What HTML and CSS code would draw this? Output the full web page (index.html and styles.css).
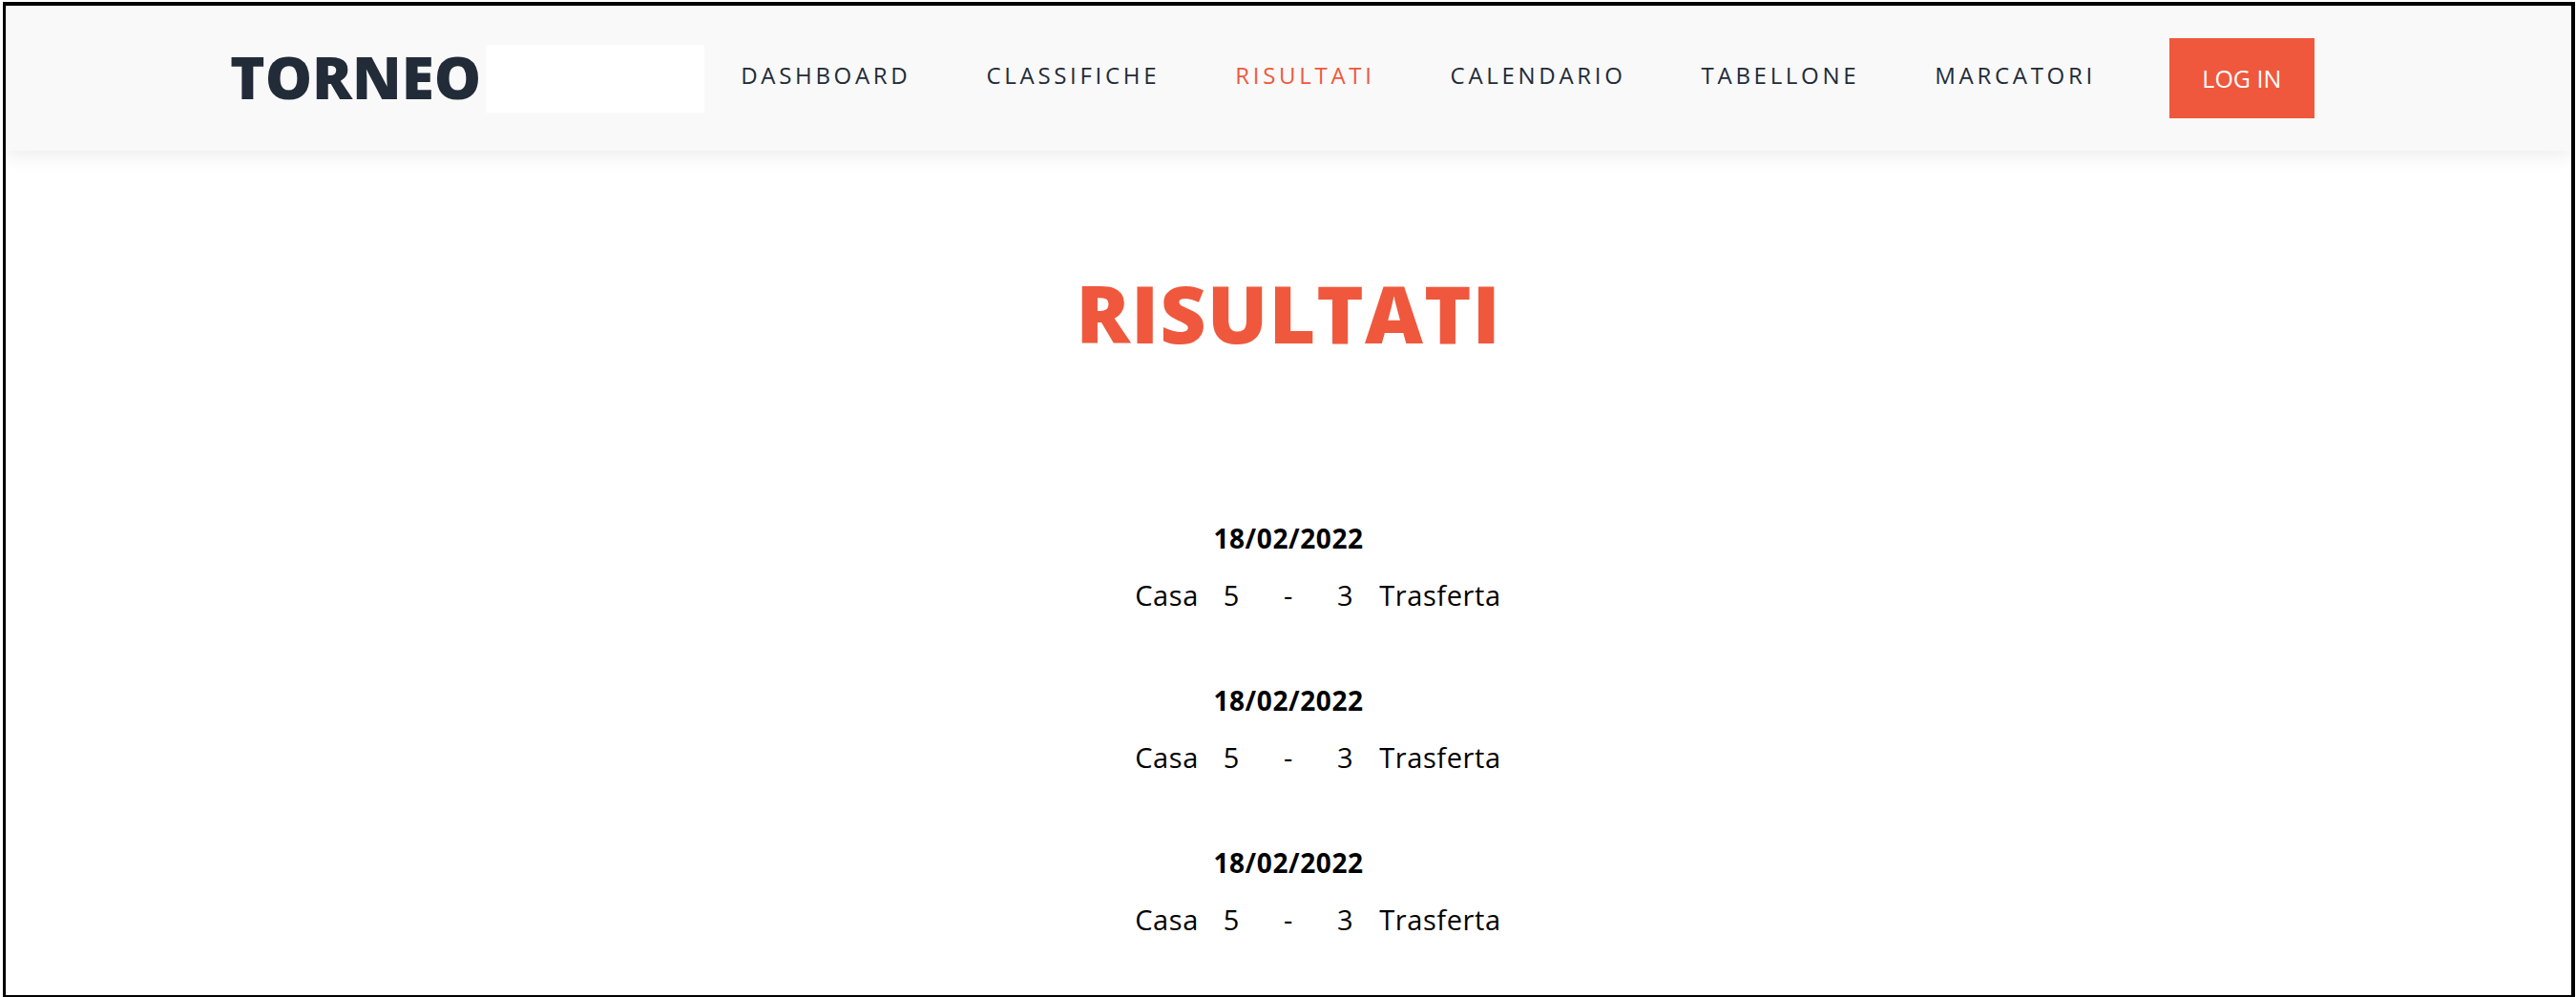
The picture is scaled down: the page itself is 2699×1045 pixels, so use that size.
FILE: index.html
```html
<!DOCTYPE html>
<html lang="it">
<head>
<meta charset="utf-8">
<title>Torneo - Risultati</title>
<link rel="stylesheet" href="styles.css">
</head>
<body>
<div class="frame">
  <header class="topbar">
    <div class="brand">
      <span class="logo">TORNEO</span>
      <span class="logo-box"></span>
    </div>
    <nav class="nav">
      <a class="nav-link" href="#">DASHBOARD</a>
      <a class="nav-link" href="#">CLASSIFICHE</a>
      <a class="nav-link active" href="#">RISULTATI</a>
      <a class="nav-link" href="#">CALENDARIO</a>
      <a class="nav-link" href="#">TABELLONE</a>
      <a class="nav-link" href="#">MARCATORI</a>
    </nav>
    <a class="login" href="#">LOG IN</a>
  </header>
  <main class="content">
    <h1 class="title">RISULTATI</h1>
    <section class="results">
      <div class="match">
        <div class="date">18/02/2022</div>
        <div class="score">
          <span class="home"><span>Casa</span><span>5</span></span>
          <span class="sep">-</span>
          <span class="away"><span>3</span><span>Trasferta</span></span>
        </div>
      </div>
      <div class="match">
        <div class="date">18/02/2022</div>
        <div class="score">
          <span class="home"><span>Casa</span><span>5</span></span>
          <span class="sep">-</span>
          <span class="away"><span>3</span><span>Trasferta</span></span>
        </div>
      </div>
      <div class="match">
        <div class="date">18/02/2022</div>
        <div class="score">
          <span class="home"><span>Casa</span><span>5</span></span>
          <span class="sep">-</span>
          <span class="away"><span>3</span><span>Trasferta</span></span>
        </div>
      </div>
    </section>
  </main>
</div>
</body>
</html>
```
FILE: styles.css
```css
html, body {
  margin: 0;
  padding: 0;
  background: #ffffff;
}
body {
  font-family: "Open Sans", "Noto Sans", sans-serif;
  color: #000;
}
.frame {
  margin: 2px 1px 0 3px;
  border-style: solid;
  border-color: #000;
  border-width: 4px 4px 2px 3px;
  height: 1043px;
  box-sizing: border-box;
  overflow: hidden;
  background: #fff;
}
.topbar {
  height: 152px;
  background: #f9f9f9;
  box-shadow: 0 6px 18px rgba(0, 0, 0, 0.07);
  display: flex;
  align-items: center;
  padding-left: 235px;
  position: relative;
  z-index: 1;
}
.brand {
  display: flex;
  align-items: center;
}
.logo {
  font-family: "Open Sans", sans-serif;
  font-weight: 800;
  font-size: 62px;
  color: #222b38;
  line-height: 1;
  padding-bottom: 4px;
}
.logo-box {
  display: block;
  width: 229px;
  height: 71px;
  background: #ffffff;
  margin-left: 5px;
}
.nav {
  display: flex;
  align-items: center;
  gap: 79px;
  margin-left: 38px;
}
.nav-link {
  font-size: 24px;
  letter-spacing: 3.7px;
  color: #222b38;
  text-decoration: none;
  line-height: 1;
  padding-bottom: 6px;
}
.nav-link.active {
  color: #ef583d;
}
.login {
  margin-left: 77px;
  width: 152px;
  height: 84px;
  background: #ef583d;
  color: #fff;
  font-size: 25px;
  text-decoration: none;
  display: flex;
  align-items: center;
  justify-content: center;
}
.content {
  display: flex;
  flex-direction: column;
  align-items: center;
}
.title {
  margin: 128px 0 0;
  font-size: 84px;
  font-weight: 800;
  line-height: 1;
  color: #ef583d;
  letter-spacing: 1px;
}
.results {
  margin-top: 180px;
  display: flex;
  flex-direction: column;
  gap: 82px;
  width: 100%;
}
.match {
  display: flex;
  flex-direction: column;
  align-items: center;
  gap: 31px;
}
.date {
  font-size: 28px;
  font-weight: 700;
  line-height: 1;
  letter-spacing: 0.6px;
}
.score {
  display: grid;
  grid-template-columns: 1fr auto 1fr;
  width: 100%;
  font-size: 29px;
  line-height: 1;
  letter-spacing: 0.6px;
}
.home {
  display: flex;
  justify-content: flex-end;
  gap: 26px;
}
.away {
  display: flex;
  justify-content: flex-start;
  gap: 27px;
}
.sep {
  padding: 0 46px;
}
```
